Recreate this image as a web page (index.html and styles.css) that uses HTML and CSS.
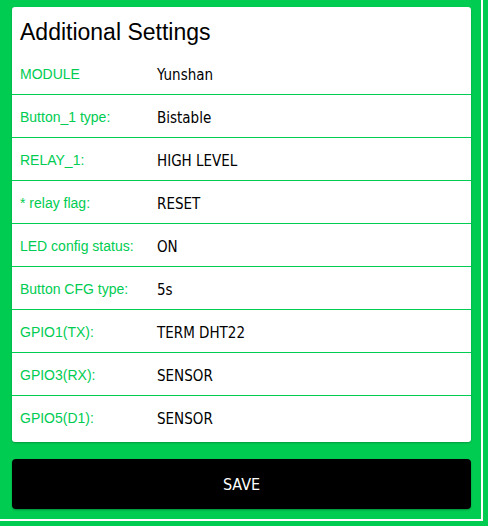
FILE: index.html
```html
<!DOCTYPE html>
<html lang="en">
  <head>
    <meta charset="utf-8">
    <title>Additional Settings</title>
    <link rel="stylesheet" href="styles.css">
  </head>
  <body>
    <div class="frame">
      <div class="card">
        <h2 class="title">Additional Settings</h2>
        <div class="row"><span class="label">MODULE</span><span class="value">Yunshan</span></div>
        <div class="row"><span class="label">Button_1 type:</span><span class="value">Bistable</span></div>
        <div class="row"><span class="label">RELAY_1:</span><span class="value">HIGH LEVEL</span></div>
        <div class="row"><span class="label">* relay flag:</span><span class="value">RESET</span></div>
        <div class="row"><span class="label">LED config status:</span><span class="value">ON</span></div>
        <div class="row"><span class="label">Button CFG type:</span><span class="value">5s</span></div>
        <div class="row"><span class="label">GPIO1(TX):</span><span class="value">TERM DHT22</span></div>
        <div class="row"><span class="label">GPIO3(RX):</span><span class="value">SENSOR</span></div>
        <div class="row"><span class="label">GPIO5(D1):</span><span class="value">SENSOR</span></div>
      </div>
      <button class="save" type="button">SAVE</button>
    </div>
  </body>
</html>
```

FILE: styles.css
```css
html, body {
    margin: 0;
    background: #00cc52;
    font-family: 'Liberation Sans', Arial, sans-serif;
}

.frame {
    box-sizing: border-box;
    width: 483px;
    height: 521px;
    padding: 7px 10px 0 12px;
    border-right: 2px solid #fff;
    border-bottom: 2px solid #fff;
}

.card {
    background: #fff;
    border-radius: 3px;
    padding-bottom: 4px;
    box-shadow: 0 1px 2px rgba(0, 0, 0, .25);
}

.title {
    margin: 0;
    height: 45px;
    padding: 13px 8px 0;
    box-sizing: border-box;
    font-size: 23px;
    font-weight: normal;
    line-height: 24px;
    color: #000;
}

.row {
    display: flex;
    align-items: center;
    height: 43px;
    box-sizing: border-box;
    padding: 2px 0 0 8px;
    border-bottom: 1px solid #00cc52;
}
.row:last-child {
    border-bottom: none;
    height: 42px;
}

.label {
    width: 137px;
    font-size: 14px;
    color: #00cc52;
}

.value {
    padding-top: 2px;
    font-family: 'DejaVu Sans Condensed', 'DejaVu Sans', sans-serif;
    font-size: 15px;
    color: #000;
}

.save {
    display: block;
    width: 100%;
    height: 50px;
    margin-top: 17px;
    border: none;
    border-radius: 4px;
    background: #000;
    color: #fff;
    font-family: 'DejaVu Sans Condensed', 'DejaVu Sans', sans-serif;
    font-size: 16px;
    box-shadow: 0 1px 2px rgba(0, 0, 0, .3);
}
```
